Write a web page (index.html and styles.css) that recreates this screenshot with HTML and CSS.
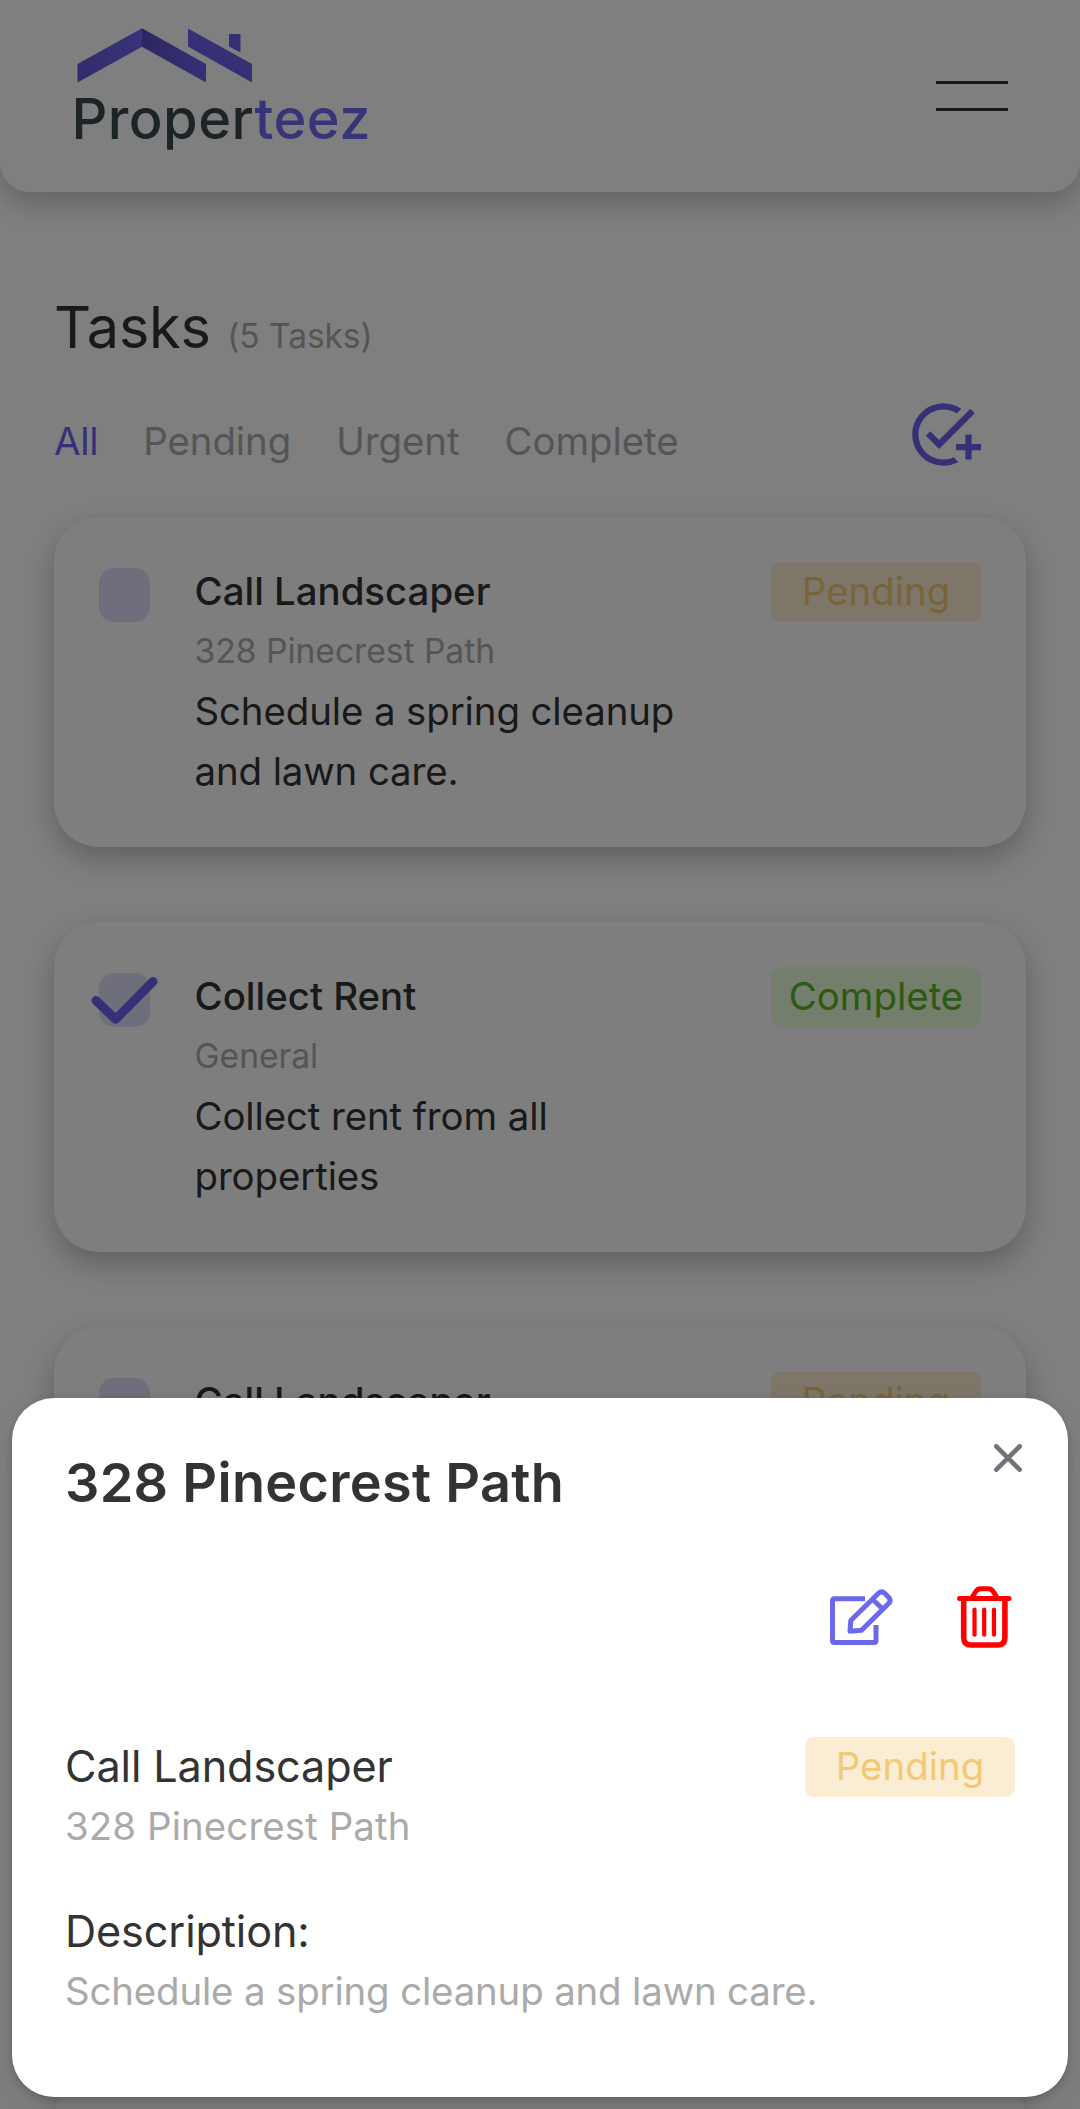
FILE: index.html
```html
<!DOCTYPE html>
<html lang="en">
<head>
<meta charset="utf-8">
<title>Properteez – Tasks</title>
<link rel="stylesheet" href="styles.css">
</head>
<body>
<div class="page">
  <header class="header">
    <svg class="logo" width="300" height="140" viewBox="0 0 300 140" role="img" aria-label="Properteez">
      <defs>
        <linearGradient id="roofLeft" x1="0" x2="1"><stop offset="0" stop-color="#6558dc"/><stop offset="1" stop-color="#7068f2"/></linearGradient>
        <linearGradient id="roofRight" x1="0" x2="1"><stop offset="0" stop-color="#594fc4"/><stop offset="1" stop-color="#6c63ec"/></linearGradient>
      </defs>
      <path fill="url(#roofLeft)" d="M5.5 44 70 8.3V26.7L5.5 62.5z"/>
      <path fill="url(#roofRight)" d="M70 8.3 134 44V62.5L70 26.7z"/>
      <path fill="#6c63ec" d="M116 8.5 180 44V62.5L116 26.5zM157 14h11.500v18.500L157 26.500z"/>
      <text class="wordmark" x="-0.5" y="119" textLength="299" lengthAdjust="spacing"><tspan fill="#3a484e">Proper</tspan><tspan fill="#7068f0">teez</tspan></text>
    </svg>
    <div class="menu"><span class="menu-line"></span><span class="menu-line"></span></div>
  </header>

  <main class="content">
    <h1 class="heading">Tasks <small class="count">(5 Tasks)</small></h1>
    <div class="toolbar">
      <nav class="tabs">
        <span class="tab active">All</span><span class="tab">Pending</span><span class="tab">Urgent</span><span class="tab">Complete</span>
      </nav>
      <svg class="add-task" width="75" height="75" viewBox="0 0 24 24"><path d="M22 5.18 10.59 16.6l-4.24-4.24 1.41-1.41 2.83 2.83 10-10L22 5.18zM12 20c-4.410 0-8-3.590-8-8s3.590-8 8-8c1.570 0 3.040.46 4.280 1.250l1.450-1.450C16.100 2.670 14.130 2 12 2 6.480 2 2 6.480 2 12s4.480 10 10 10c1.730 0 3.360-.44 4.780-1.220l-1.500-1.500c-1 .46-2.110.72-3.280.72zm7-5h-3v2h3v3h2v-3h3v-2h-3v-3h-2v3z"/></svg>
    </div>

    <section class="list">
      <article class="card">
        <span class="checkbox"></span>
        <div class="body"><h2 class="name">Call Landscaper</h2><p class="place">328 Pinecrest Path</p><p class="text">Schedule a spring cleanup and lawn care.</p></div>
        <span class="badge pending">Pending</span>
      </article>
      <article class="card">
        <span class="checkbox"><svg class="tick" width="70" height="54" viewBox="-8 0 70 54"><path d="M-3 27.500 16.500 46.300 54 8.500"/></svg></span>
        <div class="body"><h2 class="name">Collect Rent</h2><p class="place">General</p><p class="text">Collect rent from all properties</p></div>
        <span class="badge complete">Complete</span>
      </article>
      <article class="card">
        <span class="checkbox"></span>
        <div class="body"><h2 class="name">Call Landscaper</h2><p class="place">328 Pinecrest Path</p><p class="text">Schedule a spring cleanup and lawn care.</p></div>
        <span class="badge pending">Pending</span>
      </article>
      <article class="card">
        <span class="checkbox"></span>
        <div class="body"><h2 class="name">Collect Rent</h2><p class="place">General</p><p class="text">Collect rent</p></div>
        <span class="badge pending">Pending</span>
      </article>
      <article class="card">
        <span class="checkbox"></span>
        <div class="body"><h2 class="name">Call Landscaper</h2><p class="place">General</p><p class="text">Schedule a spring cleanup</p></div>
        <span class="badge pending">Pending</span>
      </article>
    </section>
  </main>
</div>

<div class="overlay">
  <div class="modal" role="dialog">
    <div class="modal-head">
      <h2 class="modal-title">328 Pinecrest Path</h2>
      <svg class="close" width="28" height="28" viewBox="0 0 28 28"><path d="M2.300 2.300 25.700 25.700M25.700 2.300 2.300 25.700"/></svg>
    </div>
    <div class="actions">
      <svg class="edit" width="64" height="64" viewBox="829 1585 64 64">
        <path d="M865 1598.800H834.500Q832.500 1598.800 832.500 1600.800V1640.400Q832.500 1642.400 834.500 1642.400H874Q876 1642.400 876 1640.400V1625"/>
        <path d="M850 1631.200 850.800 1620.500 878.500 1593.300Q881.600 1590.300 884.700 1593.300L888.600 1597.300Q891.500 1600.400 888.600 1603.500L861.500 1630.200Z"/>
        <path d="M873.800 1600.500 883 1609.200"/>
      </svg>
      <svg class="trash" width="58" height="64" viewBox="955 1585 58 64">
        <path stroke-width="5" d="M959.500 1598.500H1009M972 1597.500 975.800 1591.500Q977.500 1588.700 980.500 1588.700H988.500Q991.500 1588.700 993.200 1591.500L997 1597.500"/>
        <path stroke-width="5.600" d="M963.700 1600V1637.500Q963.700 1645 971 1645H998Q1004.900 1645 1004.900 1637.500V1600"/>
        <path stroke-width="4.200" d="M974.500 1609.500V1634.700M984.200 1609.500V1634.700M994 1609.500V1634.700"/>
      </svg>
    </div>
    <div class="summary">
      <div><h3 class="modal-name">Call Landscaper</h3><p class="modal-text place-line">328 Pinecrest Path</p></div>
      <span class="badge pending">Pending</span>
    </div>
    <h3 class="modal-name">Description:</h3>
    <p class="modal-text">Schedule a spring cleanup and lawn care.</p>
  </div>
</div>
</body>
</html>
```

FILE: styles.css
```css
* { box-sizing: border-box; }

html, body { height: 100%; }

body {
  margin: 0;
  overflow: hidden;
  background: #fff;
  color: #333;
  font-family: Inter, "Liberation Sans", sans-serif;
  font-size: 38.4px;
  line-height: 60px;
}

h1, h2, h3, p { margin: 0; font: inherit; }
svg { display: block; }

.page { height: 2109px; overflow: hidden; }

.header {
  display: flex;
  justify-content: space-between;
  align-items: center;
  height: 192px;
  padding: 0 72px;
  border-radius: 0 0 30px 30px;
  background: #fff;
  box-shadow: 0 12px 30px rgba(0, 0, 0, .22);
}
.logo { margin-top: -12px; overflow: visible; }
.wordmark { font: 500 56px Inter, sans-serif; }
.menu { display: grid; gap: 24px; }
.menu-line { width: 72px; height: 3px; background: #333; }

.content { padding: 98px 54px 0; }
.heading {
  display: flex;
  align-items: baseline;
  gap: 16.5px;
  height: 75px;
  font-size: 57.6px;
  line-height: 75px;
  letter-spacing: -.2px;
}
.count { color: #aaa; font-size: 33.6px; letter-spacing: -.1px; }

.toolbar {
  display: flex;
  justify-content: space-between;
  align-items: center;
  height: 75px;
  margin: 32px 45px 0 0;
}
.tabs { display: flex; gap: 45px; padding-top: 13px; letter-spacing: -.05px; }
.tab { color: #aaa; }
.tab.active { color: #6c63ec; letter-spacing: -.3px; }
.add-task { fill: #6c63ec; }

.list { display: grid; gap: 75px; margin-top: 45px; }
.card {
  display: grid;
  grid-template-columns: 51px 1fr 210px;
  column-gap: 44.5px;
  align-items: start;
  padding: 45px;
  border-radius: 45px;
  background: #fdfdfd;
  box-shadow: 0 12px 30px rgba(0, 0, 0, .25);
}
.body { max-width: 500px; margin: -1px 0 1px; }
.checkbox {
  display: flex;
  width: 51px;
  height: 54px;
  margin-top: 6px;
  border-radius: 15px;
  background: #dfddf8;
}
.tick { flex: none; margin-left: -8px; overflow: visible; }
.tick path {
  fill: none;
  stroke: #6c63ec;
  stroke-width: 9;
  stroke-linecap: round;
  stroke-linejoin: round;
}
.name { font-weight: 500; }
.place { color: #aaa; font-size: 33.6px; }
.text { letter-spacing: -.1px; }

.badge {
  display: block;
  width: 210px;
  height: 60px;
  border-radius: 9px;
  line-height: 58px;
  text-align: center;
}
.pending { background: #fbedd3; color: #f2c974; }
.complete { background: #e6fdda; color: #58b422; }

.overlay {
  position: absolute;
  inset: 0;
  display: flex;
  align-items: flex-end;
  padding: 12px;
  background: rgba(0, 0, 0, .5);
}
.modal {
  width: 100%;
  height: 699px;
  padding: 45px 53px 0 53px;
  border-radius: 42px;
  background: #fff;
  box-shadow: 0 3px 9px rgba(0, 0, 0, .2), 0 30px 60px rgba(0, 0, 0, .06);
}
.modal-head { display: flex; justify-content: space-between; }
.modal-title { padding-top: 10px; font-size: 54px; font-weight: 600; letter-spacing: .3px; }
.close { margin: 1px -7px 0 0; fill: none; stroke: #6f7479; stroke-width: 4.6; stroke-linecap: round; }
.actions { display: flex; justify-content: flex-end; gap: 62px; margin: 72px 2px 0 0; }
.edit { fill: none; stroke: #6c68ec; stroke-width: 5; stroke-linejoin: round; }
.trash { fill: none; stroke: #f00; stroke-linecap: round; stroke-linejoin: round; }
.summary { display: flex; justify-content: space-between; margin: 88px 0 45px; }
.modal-name { margin-top: -1px; font-size: 43.2px; letter-spacing: -.12px; }
.modal-text { color: #aaa; letter-spacing: -.15px; }
.place-line { margin-bottom: 1px; letter-spacing: .1px; }
```
